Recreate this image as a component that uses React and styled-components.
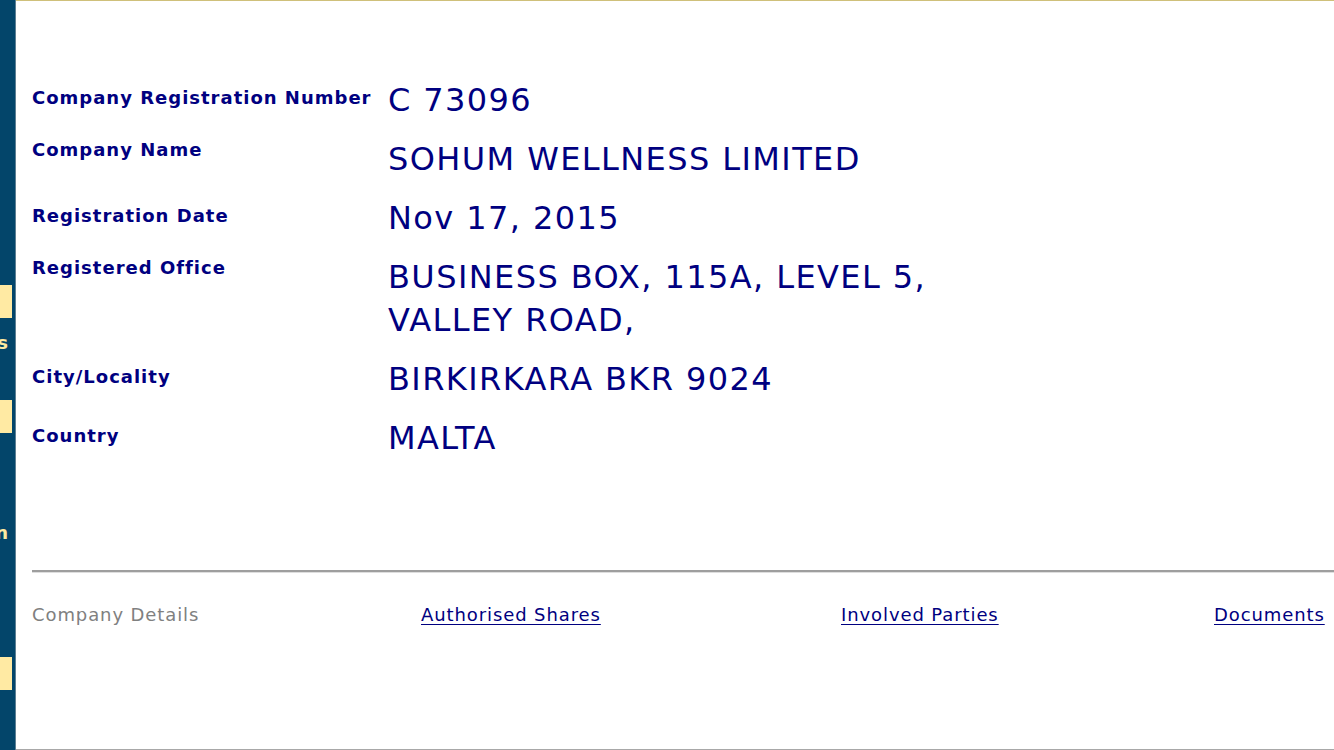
import styled, { createGlobalStyle } from "styled-components";

const GlobalStyle = createGlobalStyle`
  * { box-sizing: border-box; }
  body {
    margin: 0;
    font-family: "DejaVu Sans", Verdana, sans-serif;
    background: #fff;
  }
`;

const Page = styled.div`
  display: flex;
  height: 750px;
  width: 1334px;
  overflow: hidden;
`;

const Sidebar = styled.nav`
  width: 16px;
  flex-shrink: 0;
  background-color: #03456a;
  border-right: 1px solid #5d7f93;
  overflow: hidden;
  padding-top: 285px;
`;

const MenuBox = styled.div`
  display: flex;
  justify-content: flex-end;
  padding-right: 3px;
  margin-bottom: ${(p) => p.$after}px;

  &::before {
    content: "";
    display: block;
    flex-shrink: 0;
    width: 160px;
    height: 33px;
    background-color: #ffeaa3;
  }
`;

const MenuText = styled.div`
  display: flex;
  justify-content: flex-end;
  padding-right: 7px;
  white-space: nowrap;
  font-size: 18px;
  font-weight: bold;
  line-height: 22px;
  color: #ffe9a0;
  margin-bottom: ${(p) => p.$after}px;
`;

const Main = styled.main`
  flex: 1;
  border-top: 1px solid #cfc07a;
  border-bottom: 1px solid #a8a8a8;
  padding-left: 16px;
  color: #000080;
`;

const Details = styled.section`
  padding-top: 78px;
`;

const Row = styled.div`
  display: grid;
  grid-template-columns: 356px 1fr;
  margin-bottom: 16px;
`;

const Label = styled.div`
  font-size: 18px;
  font-weight: bold;
  letter-spacing: 1px;
  line-height: 21px;
  padding-top: ${(p) => p.$top}px;
`;

const Value = styled.div`
  font-size: 32px;
  line-height: 43px;
  letter-spacing: 1.4px;
`;

const Divider = styled.hr`
  margin: 110px 0 0 0;
  height: 0;
  border: none;
  border-top: 2px solid #9e9e9e;
  border-bottom: 1px solid #dedede;
`;

const Tabs = styled.div`
  display: grid;
  grid-template-columns: 389px 420px 373px auto;
  margin-top: 31px;
  font-size: 18px;
  letter-spacing: 0.9px;
  line-height: 21px;
`;

const TabCurrent = styled.span`
  color: #808080;
`;

const TabLink = styled.a`
  color: #000080;
  text-decoration: underline;
  text-underline-offset: 3px;
  cursor: pointer;
  justify-self: start;
`;

const rows = [
  { label: "Company Registration Number", value: ["C 73096"], top: 8 },
  { label: "Company Name", value: ["SOHUM WELLNESS LIMITED"], top: 1 },
  { label: "Registration Date", value: ["Nov 17, 2015"], top: 8 },
  { label: "Registered Office", value: ["BUSINESS BOX, 115A, LEVEL 5,", "VALLEY ROAD,"], top: 1 },
  { label: "City/Locality", value: ["BIRKIRKARA BKR 9024"], top: 8 },
  { label: "Country", value: ["MALTA"], top: 8 },
];

export default function App() {
  return (
    <>
      <GlobalStyle />
      <Page>
        <Sidebar>
          <MenuBox $after={14} />
          <MenuText $after={46}>Companies</MenuText>
          <MenuBox $after={89} />
          <MenuText $after={113}>Registration</MenuText>
          <MenuBox $after={0} />
        </Sidebar>
        <Main>
          <Details>
            {rows.map((r) => (
              <Row key={r.label}>
                <Label $top={r.top}>{r.label}</Label>
                <Value>
                  {r.value.map((line) => (
                    <div key={line}>{line}</div>
                  ))}
                </Value>
              </Row>
            ))}
          </Details>
          <Divider />
          <Tabs>
            <TabCurrent>Company Details</TabCurrent>
            <TabLink>Authorised Shares</TabLink>
            <TabLink>Involved Parties</TabLink>
            <TabLink>Documents</TabLink>
          </Tabs>
        </Main>
      </Page>
    </>
  );
}
